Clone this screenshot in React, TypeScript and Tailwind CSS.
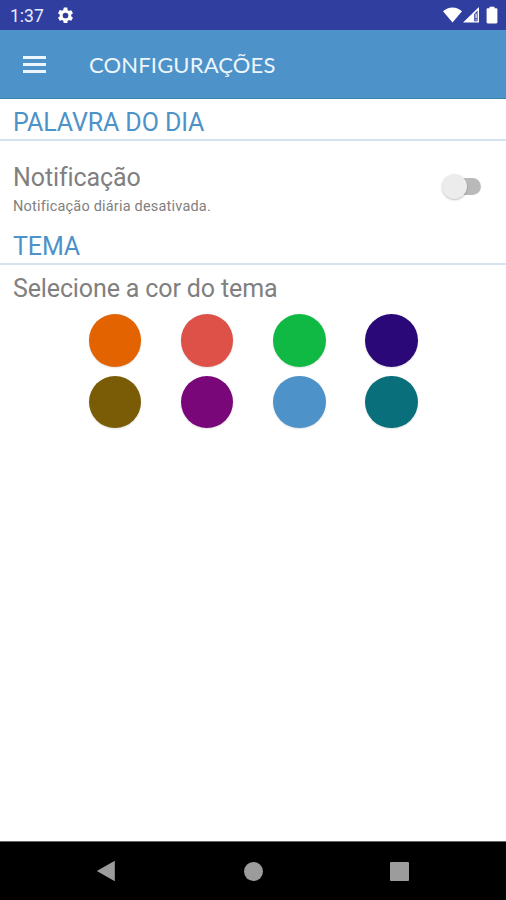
const THEME_COLORS = [
  { name: 'Laranja', bg: 'bg-[#e26300]' },
  { name: 'Coral', bg: 'bg-[#de5149]' },
  { name: 'Verde', bg: 'bg-[#10b943]' },
  { name: 'Índigo', bg: 'bg-[#2b0878]' },
  { name: 'Oliva', bg: 'bg-[#7a5c07]' },
  { name: 'Roxo', bg: 'bg-[#790779]' },
  { name: 'Azul', bg: 'bg-[#4d92c8]' },
  { name: 'Petróleo', bg: 'bg-[#096f7a]' },
];

function StatusBar() {
  return (
    <div className="flex h-[30px] items-center bg-[#303e9f] pl-[10px] pr-[8px] text-white">
      <span className="w-[46px] pt-[2px] text-[17.5px] leading-[28px] text-[#e8ebff]">1:37</span>
      <svg className="size-[19px]" viewBox="0 0 24 24" fill="currentColor">
        <path d="M19.14 12.94c.04-.3.06-.61.06-.94 0-.32-.02-.64-.07-.94l2.03-1.58a.49.49 0 0 0 .12-.61l-1.92-3.32a.49.49 0 0 0-.59-.22l-2.39.96a7 7 0 0 0-1.62-.94l-.36-2.54A.48.48 0 0 0 13.92 2h-3.84a.48.48 0 0 0-.47.41l-.36 2.54c-.59.24-1.13.57-1.62.94l-2.39-.96a.48.48 0 0 0-.59.22L2.74 8.87a.48.48 0 0 0 .12.61l2.03 1.58c-.05.3-.09.63-.09.94s.02.64.07.94l-2.03 1.58a.49.49 0 0 0-.12.61l1.92 3.32c.12.22.37.29.59.22l2.39-.96c.5.38 1.03.7 1.62.94l.36 2.54c.05.24.24.41.48.41h3.84c.24 0 .44-.17.47-.41l.36-2.54a7 7 0 0 0 1.62-.94l2.39.96c.22.08.47 0 .59-.22l1.92-3.32a.48.48 0 0 0-.12-.61zM12 15.6a3.6 3.6 0 1 1 0-7.2 3.6 3.6 0 0 1 0 7.2z" />
      </svg>
      <div className="ml-auto flex items-center">
        {/* wifi, signal, battery */}
        <svg className="h-[16px] w-[19px]" viewBox="0 0 19 16" fill="currentColor">
          <path d="M0 4.3C2.7 1.7 5.9.4 9.5.4s6.8 1.3 9.500 3.9L9.5 15.6z" />
        </svg>
        <svg className="ml-[1px] h-[16px] w-[17px]" viewBox="0 0 17 16" fill="currentColor">
          <path fillRule="evenodd" d="M16 0v15.6H0zM14.600 3.600 11.200 7v7.200h3.400z" />
          <path d="M12.500 6.500h1.200v4.800h-1.200zM12.500 12.200h1.200v1.400h-1.200z" />
        </svg>
        <svg className="ml-[6px] h-[18px] w-[12px]" viewBox="0 0 12 18" fill="currentColor">
          <path d="M3.500.8h5v1.500h1.700c.7 0 1.200.5 1.200 1.200v12.800c0 .7-.5 1.200-1.200 1.200H1.800c-.7 0-1.200-.5-1.200-1.200V3.500c0-.7.5-1.200 1.200-1.200h1.700z" />
        </svg>
      </div>
    </div>
  );
}

function AppBar() {
  return (
    <header className="flex h-[69px] items-center border-b border-[#3c83b5] bg-[#4d92c8] pl-[23px]">
      <button aria-label="Menu" className="flex w-[23px] flex-col gap-[4px]">
        <span className="h-[3px] bg-[#edf6fd]" />
        <span className="h-[3px] bg-[#edf6fd]" />
        <span className="h-[3px] bg-[#edf6fd]" />
      </button>
      <h1 className="ml-[43px] pt-px font-[Lato,sans-serif] text-[22px] leading-[30px] tracking-[0.15px] text-[#edf6fd]">
        CONFIGURAÇÕES
      </h1>
    </header>
  );
}

function Section({ title }: { title: string }) {
  return (
    <h2 className="h-[42px] border-b-2 border-[#d5e3f0] px-[13px] pt-[5px] text-[25px] leading-[38px] tracking-[-0.1px] text-[#4d92c8]">
      {title}
    </h2>
  );
}

function Switch() {
  return (
    <button role="switch" aria-checked="false" aria-label="Notificação" className="flex w-[40px] items-center">
      <span className="z-10 size-[25px] rounded-full bg-[#ececec] shadow-[0_1px_2px_rgba(0,0,0,0.25)]" />
      <span className="-ml-[16px] h-[17px] w-[30px] rounded-full bg-[#b9b9b9]" />
    </button>
  );
}

function NavBar() {
  return (
    <nav className="flex h-[59px] items-center border-t border-[#666] bg-black pl-[96px] text-[#9c9c9c]">
      <svg className="h-[22px] w-[19px]" viewBox="0 0 19 22" fill="currentColor">
        <path d="M18.8.8v20.4L.8 11z" />
      </svg>
      <span className="ml-[129px] size-[19px] rounded-full bg-current" />
      <span className="ml-[127px] size-[19px] rounded-[1px] bg-current" />
    </nav>
  );
}

export default function App() {
  return (
    <div className="flex h-[900px] w-[506px] flex-col overflow-hidden bg-white font-[Roboto,sans-serif]">
      <StatusBar />
      <AppBar />

      <main className="flex-1">
        <Section title="PALAVRA DO DIA" />

        <div className="flex h-[82px] items-start justify-between pl-[13px] pr-[24px] pt-[21px] text-[#808080]">
          <div>
            <p className="text-[25px] leading-[32px] tracking-[-0.1px]">Notificação</p>
            <p className="text-[14.5px] leading-[25px] tracking-[0.2px]">Notificação diária desativada.</p>
          </div>
          <div className="pt-[12px]">
            <Switch />
          </div>
        </div>

        <Section title="TEMA" />

        <p className="pl-[13px] pt-[8px] text-[25px] leading-[32px] tracking-[-0.13px] text-[#808080]">
          Selecione a cor do tema
        </p>
        <div className="ml-[88.5px] mt-[9px] grid w-max grid-cols-4 gap-x-[39.8px] gap-y-[9px]">
          {THEME_COLORS.map((color) => (
            <button
              key={color.name}
              aria-label={color.name}
              className={`size-[52.5px] rounded-full shadow-[0_1px_2px_rgba(0,0,0,0.12)] ${color.bg}`}
            />
          ))}
        </div>
      </main>

      <NavBar />
    </div>
  );
}
